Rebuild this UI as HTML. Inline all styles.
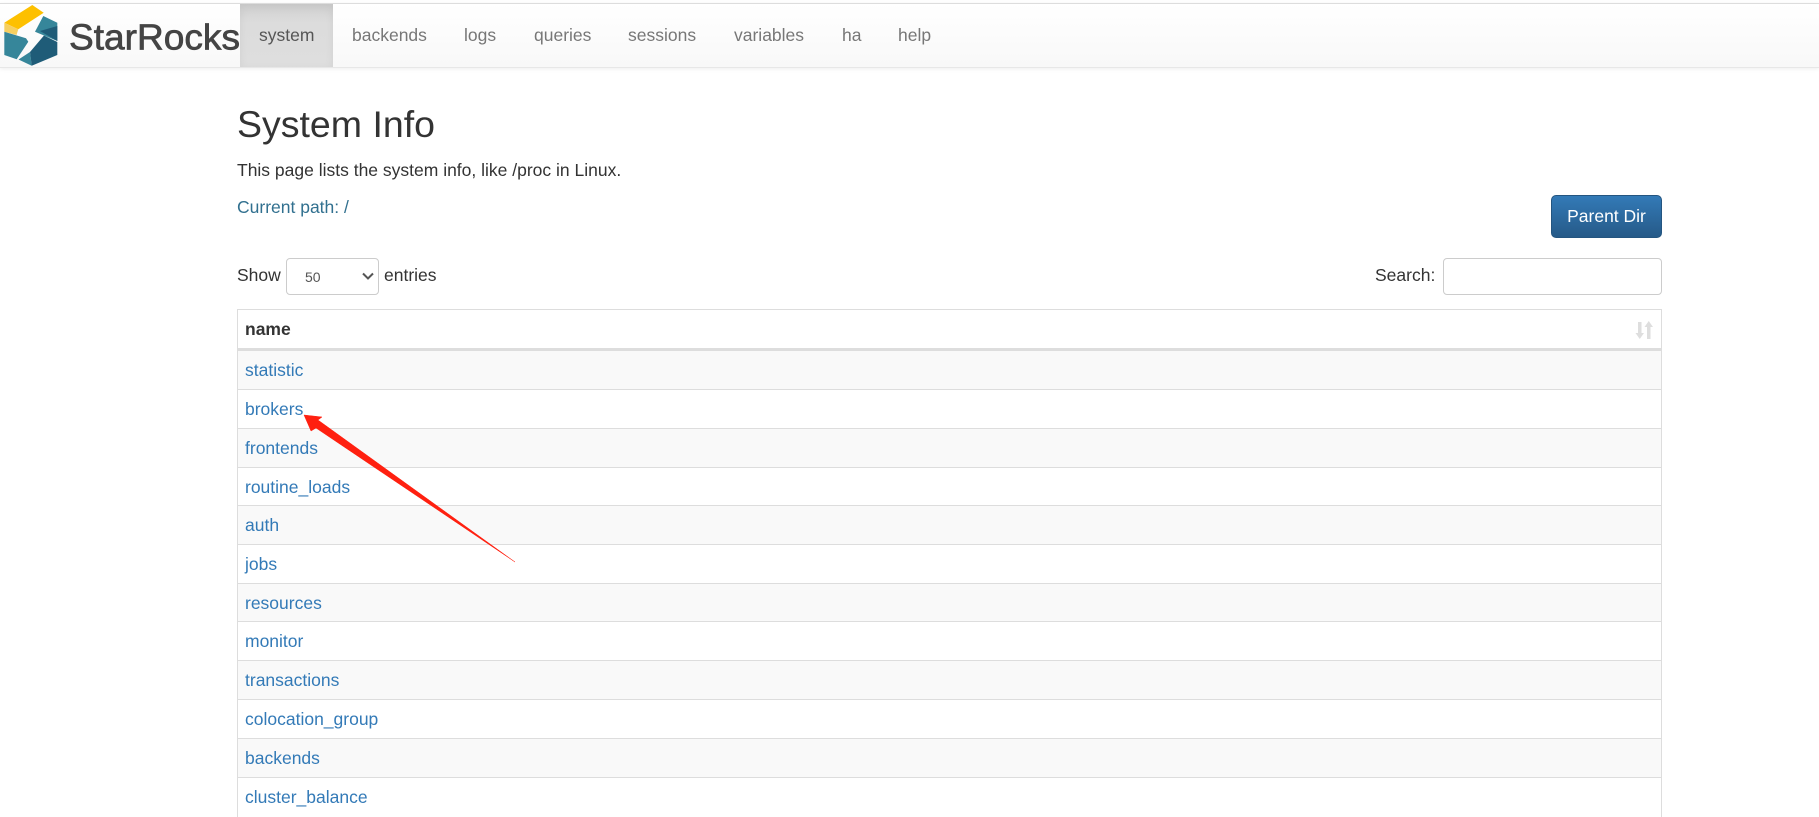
<!DOCTYPE html>
<html><head><meta charset="utf-8"><style>
html,body{margin:0;padding:0;background:#fff;width:1819px;height:808px;overflow:hidden;font-family:"Liberation Sans",Arial,sans-serif;font-size:17.5px;color:#333}
.a{position:absolute;white-space:nowrap}
#top{position:absolute;left:0;top:3px;width:1819px;border-top:1px solid #ddd;border-bottom:1px solid #e7e7e7;box-sizing:border-box;height:65px;background:linear-gradient(#fff,#f8f8f8);box-shadow:0 1px 4px rgba(0,0,0,.07)}
#act{position:absolute;left:240px;top:4px;width:93px;height:63px;background:linear-gradient(#d0d0d0,#dcdcdc 30%,#dedede);box-shadow:inset 0 3px 9px rgba(0,0,0,.06)}
.n{position:absolute;top:24px;color:#777;line-height:22px;white-space:nowrap}
.r{position:absolute;left:237px;width:1425px;box-sizing:border-box;border-left:1px solid #ddd;border-right:1px solid #ddd;border-bottom:1px solid #ddd;height:39px;padding-left:7px;line-height:39px;color:#337ab7}
.o{background:#f9f9f9}
</style></head><body>
<div id="top"></div>
<div id="act"></div>
<svg class="a" style="left:0;top:0" width="245" height="68" viewBox="0 0 245 68">
<path d="M4.3 22.7 L32.3 5 L43.7 12.7 L18.3 29.3Z" fill="#fdc000"/>
<path d="M4.3 22.7 L18.3 29.3 L16.5 35 L4.3 31.7Z" fill="#f6cf60"/>
<path d="M4.3 31.7 L26 38.3 L28.3 41.7 L16.7 59.3 L4.3 55Z" fill="#36869a"/>
<path d="M18.5 59.5 L31.7 65.7 L30 52Z" fill="#36869a"/>
<path d="M31.7 65.7 L57.3 55 L57.3 42 L44 35.5 L30 52Z" fill="#1f5c78"/>
<path d="M43.3 16 L57.3 22.7 L57.3 41 L35 31.7Z" fill="#36869a"/>
<path d="M40 31 L57.3 26 L57.3 41Z" fill="#1f5c78"/>
<text x="69" y="49.5" font-family="Liberation Sans" font-size="36" fill="#444" stroke="#444" stroke-width=".7" textLength="171" lengthAdjust="spacingAndGlyphs">StarRocks</text>
</svg>
<div class="n" style="left:259px;color:#555">system</div>
<div class="n" style="left:352px">backends</div>
<div class="n" style="left:464px">logs</div>
<div class="n" style="left:534px">queries</div>
<div class="n" style="left:628px">sessions</div>
<div class="n" style="left:734px">variables</div>
<div class="n" style="left:842px">ha</div>
<div class="n" style="left:898px">help</div>

<div class="a" style="left:237px;top:101px;font-size:37.5px;line-height:46px;color:#333">System Info</div>
<div class="a" style="left:237px;top:158px;line-height:24px">This page lists the system info, like /proc in Linux.</div>
<div class="a" style="left:237px;top:195px;line-height:24px;color:#31708f">Current path: /</div>
<div class="a" style="left:1551px;top:195px;width:111px;height:43px;box-sizing:border-box;border:1px solid #245580;border-radius:5px;background:linear-gradient(#337ab7,#265a88);color:#fff;text-align:center;line-height:41px">Parent Dir</div>
<div class="a" style="left:237px;top:264px;line-height:23px">Show</div>
<div class="a" style="left:286px;top:258px;width:93px;height:37px;box-sizing:border-box;border:1px solid #ccc;border-radius:4px;background:#fff;color:#555;font-size:14px;line-height:36px;padding-left:18px">50
<svg class="a" style="left:74px;top:13px" width="14" height="9" viewBox="0 0 14 9"><path d="M2 1.5 L7 6.5 L12 1.5" fill="none" stroke="#555" stroke-width="2"/></svg></div>
<div class="a" style="left:384px;top:264px;line-height:23px">entries</div>
<div class="a" style="left:1375px;top:264px;line-height:23px">Search:</div>
<div class="a" style="left:1443px;top:258px;width:219px;height:37px;box-sizing:border-box;border:1px solid #ccc;border-radius:4px;background:#fff"></div>

<div class="a" style="left:237px;top:309px;width:1425px;height:42px;box-sizing:border-box;border:1px solid #ddd;border-bottom:3px solid #ddd;padding-left:7px;line-height:38px;font-weight:bold;color:#333">name</div>
<svg class="a" style="left:1634px;top:320px" width="20" height="20" viewBox="0 0 20 20"><path d="M4 2 H7.5 V13 H10 L5.75 19 L1.5 13 H4Z M13 19 H16.5 V7 H19 L14.75 1 L10.5 7 H13Z" fill="#dedede"/></svg>

<div class="r o" style="top:351px">statistic</div>
<div class="r" style="top:390px">brokers</div>
<div class="r o" style="top:429px">frontends</div>
<div class="r" style="top:468px;height:38px">routine_loads</div>
<div class="r o" style="top:506px">auth</div>
<div class="r" style="top:545px">jobs</div>
<div class="r o" style="top:584px;height:38px">resources</div>
<div class="r" style="top:622px">monitor</div>
<div class="r o" style="top:661px">transactions</div>
<div class="r" style="top:700px">colocation_group</div>
<div class="r o" style="top:739px">backends</div>
<div class="r" style="top:778px;border-bottom:0">cluster_balance</div>

<svg class="a" style="left:0;top:0" width="1819" height="808" viewBox="0 0 1819 808"><path d="M304 415 L322 417 L318 420 L515 562 L316 428 L311 431Z" fill="#ff2010" stroke="#ff2010" stroke-width=".5"/></svg>
</body></html>
